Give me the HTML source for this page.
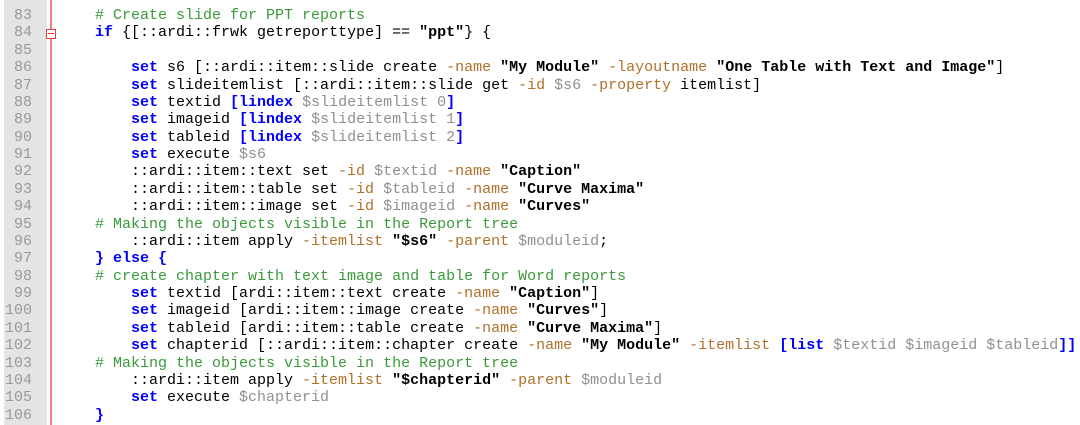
<html><head><style>
body{margin:0;width:1080px;height:425px;background:#fff;overflow:hidden;position:relative;font-family:"Liberation Mono","Courier New",monospace;font-size:15px}
#g{position:absolute;left:4px;top:0;width:43px;height:425px;background:#e4e4e4}
#r{position:absolute;left:50px;top:0;width:2px;height:425px;background:#f08080}
#n{position:absolute;left:4px;top:7px;width:28px;text-align:right;color:#999;line-height:17.38px;white-space:pre}
#c{position:absolute;left:59px;top:7px;line-height:17.38px;white-space:pre;color:#000}
.k{color:#0000ff;font-weight:bold}.b{color:#0000ff;font-weight:bold}
.c{color:#3a9a3a}.o{color:#b0702a}.s{font-weight:bold}.v{color:#909090}
#f{position:absolute;left:46px;top:29px;width:8px;height:8px;border:1px solid #e04040;background:#fff}
#f:after{content:"";position:absolute;left:1px;top:3px;width:6px;height:1px;background:#e04040}
</style></head><body>
<div id="g"></div><div id="r"></div><div id="f"></div>
<div id="n">83
84
85
86
87
88
89
90
91
92
93
94
95
96
97
98
99
100
101
102
103
104
105
106</div>
<div id="c">    <span class="c"># Create slide for PPT reports</span>
    <span class="k">if</span> {[::ardi::frwk getreporttype] == <span class="s">"ppt"</span>} {

        <span class="k">set</span> s6 [::ardi::item::slide create <span class="o">-name</span> <span class="s">"My Module"</span> <span class="o">-layoutname</span> <span class="s">"One Table with Text and Image"</span>]
        <span class="k">set</span> slideitemlist [::ardi::item::slide get <span class="o">-id</span> <span class="v">$s6</span> <span class="o">-property</span> itemlist]
        <span class="k">set</span> textid <span class="b">[lindex</span> <span class="v">$slideitemlist 0</span><span class="b">]</span>
        <span class="k">set</span> imageid <span class="b">[lindex</span> <span class="v">$slideitemlist 1</span><span class="b">]</span>
        <span class="k">set</span> tableid <span class="b">[lindex</span> <span class="v">$slideitemlist 2</span><span class="b">]</span>
        <span class="k">set</span> execute <span class="v">$s6</span>
        ::ardi::item::text set <span class="o">-id</span> <span class="v">$textid</span> <span class="o">-name</span> <span class="s">"Caption"</span>
        ::ardi::item::table set <span class="o">-id</span> <span class="v">$tableid</span> <span class="o">-name</span> <span class="s">"Curve Maxima"</span>
        ::ardi::item::image set <span class="o">-id</span> <span class="v">$imageid</span> <span class="o">-name</span> <span class="s">"Curves"</span>
    <span class="c"># Making the objects visible in the Report tree</span>
        ::ardi::item apply <span class="o">-itemlist</span> <span class="s">"$s6"</span> <span class="o">-parent</span> <span class="v">$moduleid</span>;
    <span class="b">}</span> <span class="k">else</span> <span class="b">{</span>
    <span class="c"># create chapter with text image and table for Word reports</span>
        <span class="k">set</span> textid [ardi::item::text create <span class="o">-name</span> <span class="s">"Caption"</span>]
        <span class="k">set</span> imageid [ardi::item::image create <span class="o">-name</span> <span class="s">"Curves"</span>]
        <span class="k">set</span> tableid [ardi::item::table create <span class="o">-name</span> <span class="s">"Curve Maxima"</span>]
        <span class="k">set</span> chapterid [::ardi::item::chapter create <span class="o">-name</span> <span class="s">"My Module"</span> <span class="o">-itemlist</span> <span class="b">[list</span> <span class="v">$textid $imageid $tableid</span><span class="b">]]</span>
    <span class="c"># Making the objects visible in the Report tree</span>
        ::ardi::item apply <span class="o">-itemlist</span> <span class="s">"$chapterid"</span> <span class="o">-parent</span> <span class="v">$moduleid</span>
        <span class="k">set</span> execute <span class="v">$chapterid</span>
    <span class="b">}</span></div>
</body></html>
